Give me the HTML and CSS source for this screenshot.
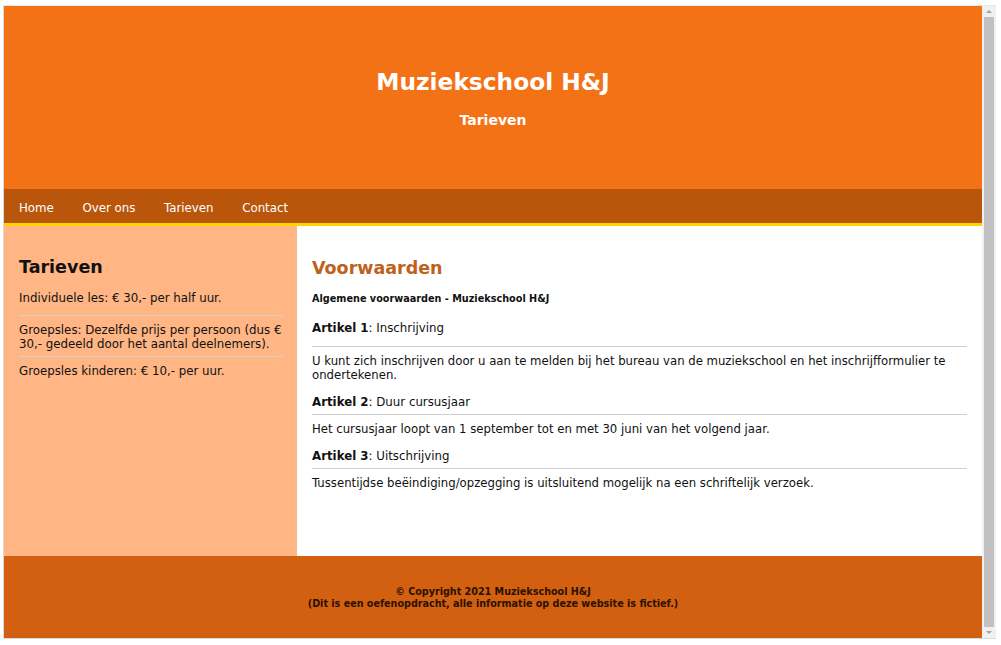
FILE: index.html
```html
<!DOCTYPE html>
<html lang="nl">
<head>
<meta charset="utf-8">
<title>Muziekschool H&amp;J - Tarieven</title>
<link rel="stylesheet" href="styles.css">
</head>
<body>
<div class="window">
  <div class="page">
    <header class="site-header">
      <h1 class="site-title">Muziekschool H&amp;J</h1>
      <p class="site-subtitle">Tarieven</p>
    </header>
    <nav class="site-nav">
      <a href="#">Home</a>
      <a href="#">Over ons</a>
      <a href="#">Tarieven</a>
      <a href="#">Contact</a>
    </nav>
    <div class="layout">
      <aside class="sidebar">
        <h2>Tarieven</h2>
        <p class="first">Individuele les: € 30,- per half uur.</p>
        <hr>
        <p>Groepsles: Dezelfde prijs per persoon (dus € 30,- gedeeld door het aantal deelnemers).</p>
        <hr>
        <p>Groepsles kinderen: € 10,- per uur.</p>
      </aside>
      <main class="content">
        <h2>Voorwaarden</h2>
        <p class="small-bold">Algemene voorwaarden - Muziekschool H&amp;J</p>
        <p class="article article-first"><b>Artikel 1</b>: Inschrijving</p>
        <hr>
        <p>U kunt zich inschrijven door u aan te melden bij het bureau van de muziekschool en het inschrijfformulier te ondertekenen.</p>
        <p class="article"><b>Artikel 2</b>: Duur cursusjaar</p>
        <hr>
        <p>Het cursusjaar loopt van 1 september tot en met 30 juni van het volgend jaar.</p>
        <p class="article"><b>Artikel 3</b>: Uitschrijving</p>
        <hr>
        <p>Tussentijdse beëindiging/opzegging is uitsluitend mogelijk na een schriftelijk verzoek.</p>
      </main>
    </div>
    <footer class="site-footer">
      <p>© Copyright 2021 Muziekschool H&amp;J<br>(Dit is een oefenopdracht, alle informatie op deze website is fictief.)</p>
    </footer>
  </div>
  <div class="scrollbar">
    <span class="arrow arrow-up"></span>
    <span class="thumb"></span>
    <span class="arrow arrow-down"></span>
  </div>
</div>
</body>
</html>
```

FILE: styles.css
```css
html, body {
  margin: 0;
  padding: 0;
  background: #ffffff;
}

body {
  font-family: "DejaVu Sans", Verdana, sans-serif;
  font-size: 11.7px;
  color: #111;
}

.window {
  display: flex;
  margin: 5px 4px 0 3px;
  border: 1px solid #d9d9d9;
  border-top-color: #e8e8e8;
  border-right: none;
  width: 993px;
  box-sizing: border-box;
}

.page {
  width: 978px;
  display: flex;
  flex-direction: column;
}

.site-header {
  height: 183px;
  flex: none;
  box-sizing: border-box;
  padding-top: 1px;
  background: #f47216;
  color: #fff;
  text-align: center;
  display: flex;
  flex-direction: column;
  justify-content: center;
}

.site-title {
  margin: 0;
  font-size: 23.3px;
  font-weight: bold;
  line-height: 28px;
}

.site-subtitle {
  margin: 15px 0 0;
  font-size: 14px;
  font-weight: bold;
  line-height: 18px;
}

.site-nav {
  flex: none;
  height: 37px;
  box-sizing: border-box;
  padding-top: 3px;
  background: #ba560c;
  border-bottom: 3px solid #ffd400;
  display: flex;
  align-items: center;
}

.site-nav a {
  color: #fff;
  text-decoration: none;
  font-size: 11.8px;
  padding: 0 14.3px;
}

.site-nav a:first-child {
  padding-left: 15px;
}

.layout {
  display: flex;
  height: 330px;
  flex: none;
}

.sidebar {
  width: 268px;
  flex: none;
  background: #ffb584;
  padding: 29px 10px 0 15px;
}

.sidebar h2,
.content h2 {
  margin: 0 0 12px;
  font-size: 17.5px;
  font-weight: bold;
  line-height: 24px;
}

.sidebar p {
  margin: 0;
  font-size: 11.8px;
  line-height: 14px;
  margin-right: 2px;
}

.sidebar hr,
.content hr {
  border: none;
  border-top: 1px solid #cfcfcf;
  height: 0;
}

.sidebar hr {
  margin: 5px 4px 7px 0;
  border-top-color: #d9cfc4;
}

.sidebar p.first {
  margin-bottom: 10px;
}

.content {
  flex: 1;
  background: #fff;
  padding: 30px 15px 0 15px;
}

.content h2 {
  color: #c0611b;
  margin-bottom: 12px;
}

.content p {
  margin: 0;
  line-height: 14px;
}

.content .small-bold {
  font-size: 9.7px;
  font-weight: bold;
  margin-bottom: 14px;
}

.content .article {
  font-size: 11.8px;
  line-height: 16px;
}

.content hr {
  margin: 4px 0 7px;
}

.content .article-first + hr {
  margin-top: 10px;
  margin-bottom: 7px;
}

.content p + .article {
  margin-top: 12px;
}

.site-footer {
  height: 82px;
  flex: none;
  background: #d35f10;
  display: flex;
  align-items: center;
  justify-content: center;
  text-align: center;
}

.site-footer p {
  margin: 0;
  padding-top: 1px;
  font-size: 9.6px;
  font-weight: bold;
  color: #2a1200;
  line-height: 12px;
}

.scrollbar {
  width: 14px;
  background: #f0f0f0;
  display: flex;
  flex-direction: column;
  align-items: center;
}

.scrollbar .arrow {
  height: 11px;
  width: 10px;
  position: relative;
}

.scrollbar .arrow-up::after,
.scrollbar .arrow-down::after {
  content: "";
  position: absolute;
  left: 2px;
  border-left: 3px solid transparent;
  border-right: 3px solid transparent;
}

.scrollbar .arrow-up::after {
  top: 4px;
  border-bottom: 3px solid #a3a3a3;
}

.scrollbar .arrow-down::after {
  bottom: 4px;
  border-top: 3px solid #a3a3a3;
}

.scrollbar .thumb {
  flex: 1;
  width: 10px;
  background: #c1c1c1;
}
```
